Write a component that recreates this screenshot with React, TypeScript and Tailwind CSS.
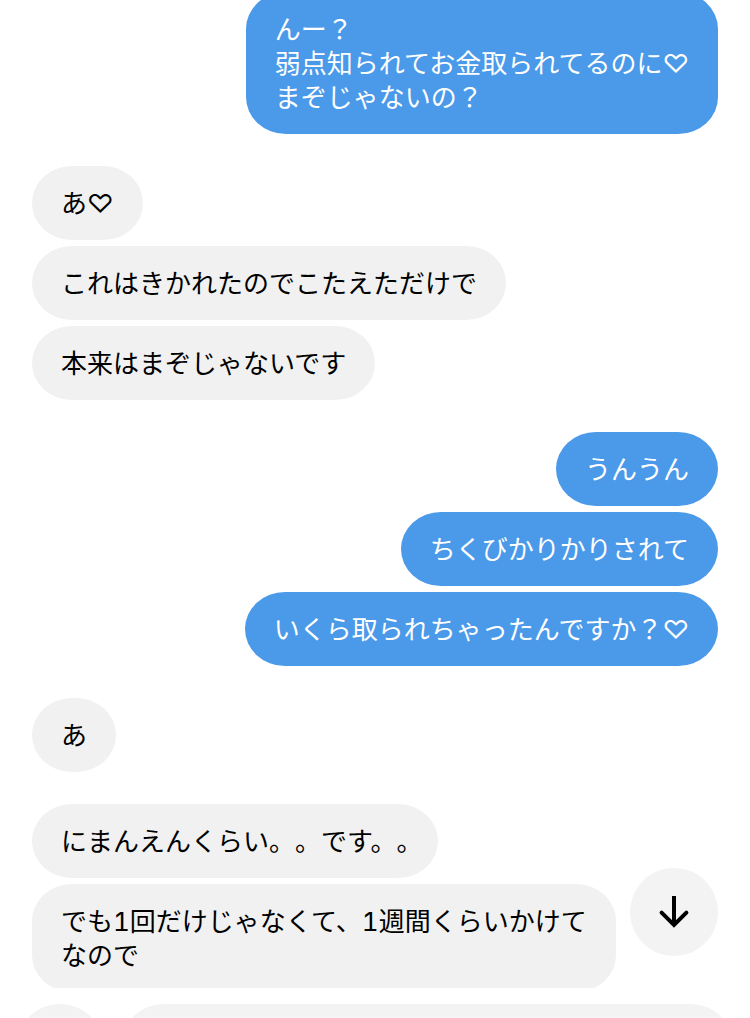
import { useState } from 'react';
import clsx from 'clsx';

interface Message {
  id: number;
  text: string;
}

interface MessageGroup {
  id: number;
  mine: boolean;
  messages: Message[];
}

const groups: MessageGroup[] = [
  {
    id: 1,
    mine: true,
    messages: [{ id: 1, text: 'んー？\n弱点知られてお金取られてるのに♡\nまぞじゃないの？' }],
  },
  {
    id: 2,
    mine: false,
    messages: [
      { id: 2, text: 'あ♡' },
      { id: 3, text: 'これはきかれたのでこたえただけで' },
      { id: 4, text: '本来はまぞじゃないです' },
    ],
  },
  {
    id: 3,
    mine: true,
    messages: [
      { id: 5, text: 'うんうん' },
      { id: 6, text: 'ちくびかりかりされて' },
      { id: 7, text: 'いくら取られちゃったんですか？♡' },
    ],
  },
  {
    id: 4,
    mine: false,
    messages: [{ id: 8, text: 'あ' }],
  },
  {
    id: 5,
    mine: false,
    messages: [
      { id: 9, text: 'にまんえんくらい。。です。。' },
      { id: 10, text: 'でも1回だけじゃなくて、1週間くらいかけて\nなので' },
    ],
  },
];

function Bubble({ text, mine }: { text: string; mine: boolean }) {
  // a closing 。 is set half-width so it doesn't pad out the bubble
  const endsWithStop = text.endsWith('。');

  return (
    <p
      className={clsx(
        'whitespace-pre-line rounded-[40px/37px] px-[29px] pt-[21px] pb-[19px]',
        mine ? 'bg-[#4b99e9] text-white' : 'bg-[#f1f1f1] text-black'
      )}
    >
      {endsWithStop ? text.slice(0, -1) : text}
      {endsWithStop && <span className="[font-feature-settings:'halt']">。</span>}
    </p>
  );
}

export default function App() {
  const [draft, setDraft] = useState('');

  return (
    <div className="flex h-screen flex-col bg-white font-['Inter','Noto_Sans_CJK_JP',sans-serif] text-[26px] leading-[34px] tabular-nums [text-spacing-trim:space-all]">
      <main className="relative min-h-0 flex-1 overflow-hidden">
        <div className="-mt-2 flex flex-col gap-8 px-8">
          {groups.map((group) => (
            <div
              key={group.id}
              className={clsx('flex flex-col gap-1.5', group.mine ? 'items-end' : 'items-start')}
            >
              {group.messages.map((message) => (
                <Bubble key={message.id} text={message.text} mine={group.mine} />
              ))}
            </div>
          ))}
        </div>

        <button
          type="button"
          aria-label="最新のメッセージへ"
          className="absolute right-8 bottom-8 flex size-22 items-center justify-center rounded-full bg-[#f3f3f3] text-black"
        >
          <svg
            viewBox="0 0 32 36"
            className="h-9 w-8"
            fill="none"
            stroke="currentColor"
            strokeWidth="4"
            aria-hidden="true"
          >
            <path d="M16 2v28" />
            <path d="M3.6 18.6L16 31l12.4-12.4" strokeLinecap="round" strokeLinejoin="miter" />
          </svg>
        </button>
      </main>

      {/* composer, mostly below the fold */}
      <footer className="flex h-[30px] shrink-0 items-start gap-4 overflow-hidden bg-white px-4 pt-4">
        <button
          type="button"
          aria-label="メディアを追加"
          className="size-22 shrink-0 rounded-full bg-[#f3f3f3]"
        />
        <input
          type="text"
          aria-label="メッセージ"
          value={draft}
          onChange={(e) => setDraft(e.target.value)}
          className="h-22 min-w-0 flex-1 rounded-[44px] bg-[#f3f3f3] px-8 outline-none"
        />
      </footer>
    </div>
  );
}
